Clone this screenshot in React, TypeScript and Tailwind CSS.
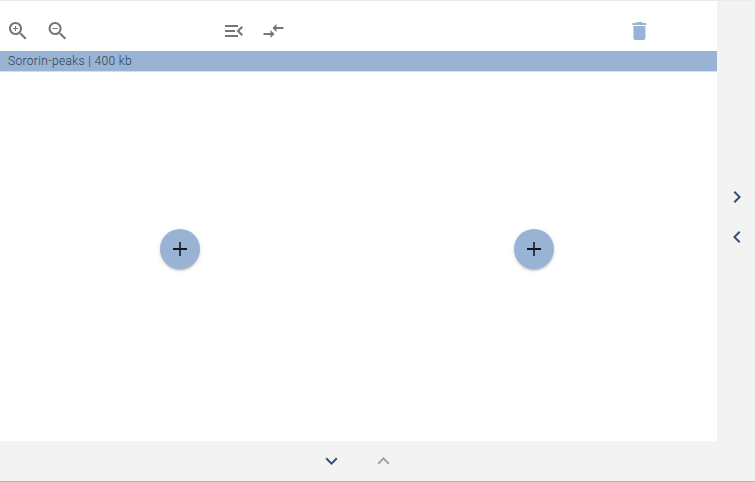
import React from "react";

function Icon({ d, className = "" }: { d: string; className?: string }) {
  return (
    <svg viewBox="0 0 24 24" fill="currentColor" className={`block size-6 shrink-0 ${className}`}>
      <path d={d} />
    </svg>
  );
}

const lens =
  "M15.5 14h-.79l-.28-.27C15.41 12.59 16 11.11 16 9.5 16 5.91 13.09 3 9.5 3S3 5.91 3 9.5 5.91 16 9.5 16c1.61 0 3.09-.59 4.23-1.57l.27.28v.79l5 4.99L20.49 19l-4.99-5zm-6 0C7.01 14 5 11.99 5 9.5S7.01 5 9.5 5 14 7.01 14 9.5 11.99 14 9.5 14z";

const icons = {
  zoomIn: lens + "M12 10h-2v2H9v-2H7V9h2V7h1v2h2v1z",
  zoomOut: lens + "M7 9h5v1H7z",
  menuOpen:
    "M3 18h13v-2H3v2zm0-5h10v-2H3v2zm0-7v2h13V6H3zm18 9.59L17.42 12 21 8.41 19.59 7l-5 5 5 5L21 15.59z",
  compare: "M9.01 14H2v2h7.01v3L13 15l-3.99-4v3zm5.98-1v-3H22V8h-7.01V5L11 9l3.99 4z",
  trash: "M6 19c0 1.1.9 2 2 2h8c1.1 0 2-.9 2-2V7H6v12zM19 4h-3.5l-1-1h-5l-1 1H5v2h14V4z",
  add: "M19 13h-6.2v6h-1.6v-6H5v-2h6.2V5h1.6v6H19v2z",
  right: "M10 6L8.59 7.41 13.17 12l-4.58 4.59L10 18l6-6z",
  left: "M15.41 7.41L14 6l-6 6 6 6 1.41-1.41L10.83 12z",
  down: "M16.59 8.59L12 13.17 7.41 8.59 6 10l6 6 6-6z",
  up: "M12 8l-6 6 1.41 1.41L12 10.83l4.59 4.58L18 14z",
};

function AddButton() {
  return (
    <button className="flex size-10 items-center justify-center rounded-full bg-[#98b3d4] text-black/87 shadow-[0_3px_1px_-2px_rgba(0,0,0,0.12),0_2px_2px_0_rgba(0,0,0,0.1),0_1px_5px_0_rgba(0,0,0,0.1)]">
      <Icon d={icons.add} />
    </button>
  );
}

export default function App() {
  return (
    <div className="flex h-[482px] w-[755px] flex-col overflow-hidden border-b border-[#b0b0b0] bg-[#f3f3f3] font-['Roboto',sans-serif]">
      <div className="h-px shrink-0 bg-[#ebebeb]" />
      <div className="flex h-[440px]">
        <main className="flex w-[717px] flex-col rounded-br-[3px] bg-white">
          <div className="flex h-[50px] shrink-0 pt-[18px] pl-[6px] text-[#757575]">
            <Icon d={icons.zoomIn} />
            <Icon d={icons.zoomOut} className="ml-4 translate-x-[-0.4px]" />
            <Icon d={icons.menuOpen} className="ml-[152px]" />
            <Icon d={icons.compare} className="ml-4 translate-x-[-0.5px]" />
            <Icon d={icons.trash} className="ml-[341px] translate-x-[0.4px] text-[#98b3d4]" />
          </div>
          <div className="h-[21px] shrink-0 border-b border-[#d5dfec] bg-[#98b3d4] pl-2 text-[12px] leading-5 font-light tracking-[0.34px] text-[#303c4c]">
            Sororin-peaks | 400 kb
          </div>
          <div className="flex grow gap-[314px] pt-[157px] pl-40">
            <AddButton />
            <AddButton />
          </div>
        </main>
        <aside className="flex grow flex-col items-center gap-4 pt-[184px] pl-[2px] text-[#34507a]">
          <Icon d={icons.right} />
          <Icon d={icons.left} />
        </aside>
      </div>
      <footer className="flex h-10 gap-7 pt-2 pl-[320px]">
        <Icon d={icons.down} className="translate-x-[-0.5px] text-[#34507a]" />
        <Icon d={icons.up} className="translate-x-[-0.5px] text-[#a0a0a0]" />
      </footer>
    </div>
  );
}
